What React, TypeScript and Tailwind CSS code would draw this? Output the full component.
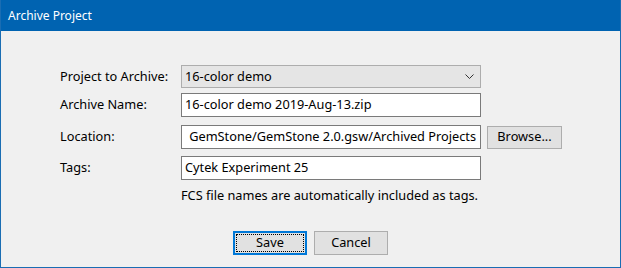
const FONT = "font-['Noto_Sans',sans-serif]";

function Chevron() {
  return (
    <svg width="9" height="5" viewBox="0 0 9 5" className="shrink-0">
      <path d="M0.5 0.5 L4.5 4.5 L8.5 0.5" fill="none" stroke="#333" strokeWidth="1" />
    </svg>
  );
}

function Field({ children }: { children: React.ReactNode }) {
  return (
    <div className="flex h-[24px] w-[300px] items-center overflow-hidden border border-[#7a7a7a] bg-white px-[3px] whitespace-nowrap">
      {children}
    </div>
  );
}

export default function App() {
  return (
    <div className={`flex h-[268px] w-[621px] flex-col border border-t-0 border-[#1a6db3] bg-[#f0f0f0] text-[12.75px] text-black ${FONT}`}>
      {/* Title bar */}
      <div className="flex h-[31px] shrink-0 items-center bg-[#0063b1] px-[7px] text-[12px] text-white">
        Archive Project
      </div>

      <div className="flex flex-1 flex-col pl-[59px] pt-[34px]">
        <div className="grid grid-cols-[121px_300px_auto] items-center gap-y-[5px]">
          <span>Project to Archive:</span>
          <div className="flex h-[23px] items-center justify-between border border-[#adadad] bg-[#e5e5e5] pl-[3px] pr-[6px]">
            <span>16-color demo</span>
            <Chevron />
          </div>
          <span />

          <span>Archive Name:</span>
          <Field>16-color demo 2019-Aug-13.zip</Field>
          <span />

          <span className="mt-[3px]">Location:</span>
          <div className="mt-[3px]">
            <Field>
              <div className="flex w-full justify-end overflow-hidden pr-[1px]">
                <span className="shrink-0">GemStone/GemStone 2.0.gsw/Archived Projects</span>
              </div>
            </Field>
          </div>
          <button className="mt-[3px] ml-[6px] h-[23px] w-[75px] border border-[#adadad] bg-[#e1e1e1]">
            Browse...
          </button>

          <span className="mt-[2px]">Tags:</span>
          <div className="mt-[2px]">
            <Field>Cytek Experiment 25</Field>
          </div>
          <span />

          <span />
          <span className="col-span-2 mt-[1px] whitespace-nowrap">FCS file names are automatically included as tags.</span>
        </div>
      </div>

      <div className="flex justify-center gap-[7px] pb-[12px]">
        <button className="flex h-[24px] w-[74px] items-center justify-center border-2 border-[#0078d7] bg-[#e1e1e1] p-[1px]">
          <span className="flex h-full w-full items-center justify-center border border-dotted border-black">Save</span>
        </button>
        <button className="h-[24px] w-[74px] border border-[#adadad] bg-[#e1e1e1]">Cancel</button>
      </div>
    </div>
  );
}
